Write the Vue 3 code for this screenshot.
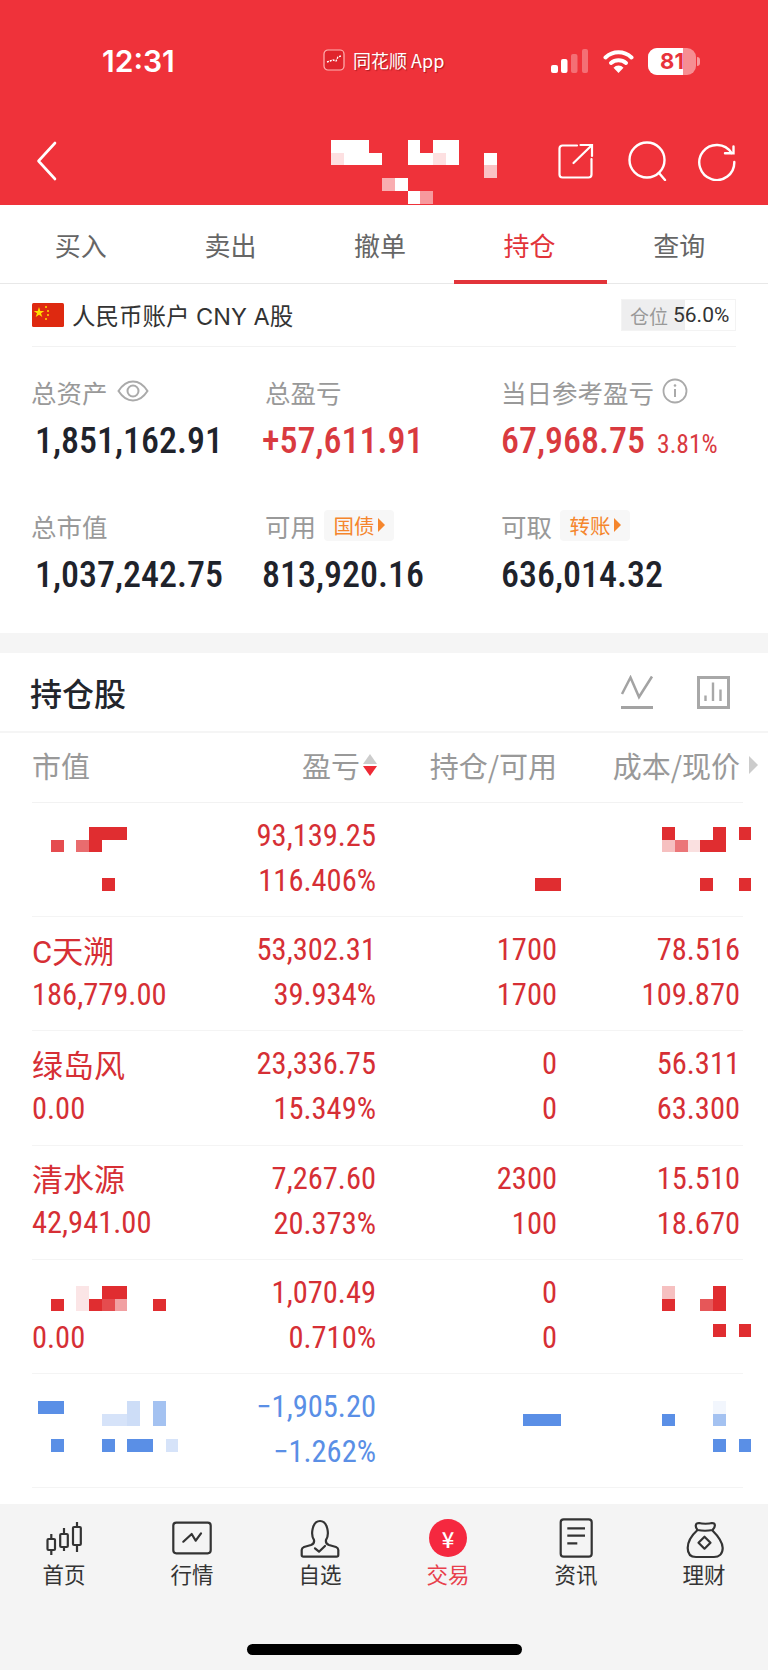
<template>
  <div class="page">
    <!-- 顶部 -->
    <header class="header">
      <div class="status">
        <span class="time">12:31</span>
        <div class="from-app">
          <svg class="app-logo" width="22" height="22" viewBox="0 0 22 22">
            <rect x="1" y="1" width="20" height="20" rx="4" fill="#e0242c" stroke="#ffb4b4" stroke-width="1.2" />
            <path d="M4 13l3-1 3-1 3 1 2-4 3-1" fill="none" stroke="#fff" stroke-width="1.4" stroke-dasharray="2 1" />
          </svg>
          <span class="app-name">同花顺 App</span>
        </div>
        <svg class="signal" width="37" height="24" viewBox="0 0 37 24">
          <rect x="0" y="16" width="7" height="8" rx="2" fill="#fff" />
          <rect x="10" y="10" width="6.5" height="14" rx="2" fill="#fff" />
          <rect x="20" y="5" width="6.5" height="19" rx="2" fill="#fff" fill-opacity=".3" />
          <rect x="31" y="0" width="6" height="24" rx="2" fill="#fff" fill-opacity=".3" />
        </svg>
        <svg class="wifi" width="31" height="24" viewBox="0 0 31 24">
          <path d="M2.5 8.5a19 19 0 0 1 26 0" fill="none" stroke="#fff" stroke-width="4" stroke-linecap="round" />
          <path d="M8 14a11.500 11.500 0 0 1 15 0" fill="none" stroke="#fff" stroke-width="4" stroke-linecap="round" />
          <path d="M15.500 24l-5-5.300a7 7 0 0 1 10 0z" fill="#fff" />
        </svg>
        <div class="battery">
          <div class="battery-fill"><span>81</span></div>
          <i class="battery-nib"></i>
        </div>
      </div>
      <div class="nav">
        <svg class="back" width="21" height="40" viewBox="0 0 21 40">
          <path d="M19 2L2.500 20 19 38" fill="none" stroke="#fff" stroke-width="2.600" stroke-linecap="round" stroke-linejoin="round" />
        </svg>
        <svg class="title-mosaic" width="166" height="64">
          <rect
            v-for="(c, i) in titleCells"
            :key="i"
            :x="c[0] * 12.75"
            :y="c[1] * 12.7"
            width="12.75"
            height="12.7"
            fill="#fff"
            :fill-opacity="c[2] ?? 1"
          />
        </svg>
        <svg class="nav-icon share" width="36" height="36" viewBox="0 0 36 36">
          <path d="M19 2.500H4.500a3 3 0 0 0-3 3v26a3 3 0 0 0 3 3h26a3 3 0 0 0 3-3V16" fill="none" stroke="#fff" stroke-width="2.200" stroke-linecap="round" />
          <path d="M15.500 20L33.500 2.500M22.500 2h11.500v11" fill="none" stroke="#fff" stroke-width="2.200" stroke-linecap="round" />
        </svg>
        <svg class="nav-icon search" width="40" height="40" viewBox="0 0 40 40">
          <circle cx="19" cy="19" r="17.500" fill="none" stroke="#fff" stroke-width="2.400" />
          <path d="M31 32l6 7" fill="none" stroke="#fff" stroke-width="2.400" stroke-linecap="round" />
        </svg>
        <svg class="nav-icon refresh" width="38" height="40" viewBox="0 0 38 40">
          <path d="M33.500 12A17.500 17.500 0 1 0 36.300 21" fill="none" stroke="#fff" stroke-width="2.400" stroke-linecap="round" />
          <path d="M35.500 5.500V12.300H27" fill="none" stroke="#fff" stroke-width="2.400" stroke-linecap="round" />
        </svg>
      </div>
    </header>

    <!-- 交易子菜单 -->
    <nav class="tabs">
      <span v-for="t in tabs" :key="t" class="tab" :class="{ active: t === '持仓' }">{{ t }}</span>
    </nav>

    <!-- 账户 -->
    <div class="account-wrap">
      <div class="account">
        <svg class="flag" width="32" height="24" viewBox="0 0 32 24">
          <rect width="32" height="24" rx="1.500" fill="#de2910" />
          <polygon points="7,4 8.300,8 12.300,8 9,10.300 10.300,14 7,11.800 3.700,14 5,10.300 1.700,8 5.700,8" fill="#ffde00" />
          <circle cx="14" cy="4" r="1" fill="#ffde00" />
          <circle cx="16" cy="8" r="1" fill="#ffde00" />
          <circle cx="16" cy="12" r="1" fill="#ffde00" />
          <circle cx="14" cy="16" r="1" fill="#ffde00" />
        </svg>
        <span class="account-name">人民币账户 CNY A股</span>
        <div class="position">
          <div class="position-fill" :style="{ width: positionRate + '%' }"></div>
          <span class="position-label">仓位</span>
          <span class="position-value">{{ positionRate.toFixed(1) }}%</span>
        </div>
      </div>
    </div>

    <!-- 资产概览 -->
    <section class="summary">
      <div class="stat">
        <div class="stat-label">
          总资产
          <svg class="eye" width="32" height="22" viewBox="0 0 32 22">
            <path d="M1.500 11C6 4 10.500 1.500 16 1.500S26 4 30.500 11C26 18 21.500 20.500 16 20.500S6 18 1.500 11z" fill="none" stroke="#aaa" stroke-width="2" />
            <circle cx="16" cy="11" r="5.500" fill="none" stroke="#aaa" stroke-width="2" />
          </svg>
        </div>
        <div class="stat-value first">1,851,162.91</div>
      </div>
      <div class="stat">
        <div class="stat-label">总盈亏</div>
        <div class="stat-value second red">+57,611.91</div>
      </div>
      <div class="stat">
        <div class="stat-label">
          当日参考盈亏
          <svg class="info" width="26" height="26" viewBox="0 0 26 26">
            <circle cx="13" cy="13" r="11.500" fill="none" stroke="#aaa" stroke-width="1.800" />
            <path d="M13 11v8" stroke="#aaa" stroke-width="2" />
            <circle cx="13" cy="7.500" r="1.300" fill="#aaa" />
          </svg>
        </div>
        <div class="stat-value red">67,968.75<small>3.81%</small></div>
      </div>
      <div class="stat">
        <div class="stat-label">总市值</div>
        <div class="stat-value first">1,037,242.75</div>
      </div>
      <div class="stat">
        <div class="stat-label">可用<span class="tag">国债<i></i></span></div>
        <div class="stat-value second">813,920.16</div>
      </div>
      <div class="stat">
        <div class="stat-label">可取<span class="tag">转账<i></i></span></div>
        <div class="stat-value">636,014.32</div>
      </div>
    </section>

    <div class="band"></div>

    <!-- 持仓股 -->
    <section class="holdings">
      <div class="holdings-head">
        <h2>持仓股</h2>
        <svg class="line-icon" width="34" height="34" viewBox="0 0 34 34">
          <path d="M2 19L10.500 2.500 19 22 32 1.500" fill="none" stroke="#a3a3a3" stroke-width="2.500" />
          <path d="M1 32.500H33" stroke="#a3a3a3" stroke-width="3" />
        </svg>
        <svg class="bar-icon" width="33" height="33" viewBox="0 0 33 33">
          <rect x="1.500" y="1.500" width="30" height="30" fill="none" stroke="#a8a8a8" stroke-width="3" />
          <path d="M8.500 19.500V25M16 6.500V25M23.500 13.500V25" stroke="#a8a8a8" stroke-width="2.400" />
        </svg>
      </div>

      <div class="table">
        <div class="table-head">
          <span>市值</span>
          <span class="sortable">盈亏<i class="sort"><b class="sort-up"></b><b class="sort-down"></b></i></span>
          <span>持仓/可用</span>
          <span class="last">成本/现价<i class="more"></i></span>
        </div>
        <div v-for="(row, idx) in rows" :key="idx" class="row" :class="row.down ? 'down' : 'up'">
          <div class="cell name-cell">
            <template v-if="row.name">
              <div class="name">{{ row.name }}</div>
              <div class="num">{{ row.value }}</div>
            </template>
            <template v-else-if="row.value">
              <svg class="mosaic name-mosaic">
                <rect v-for="(c, i) in row.nameMask" :key="i" v-bind="cellRect(6, row.top, c)" />
              </svg>
              <div class="num under-mask">{{ row.value }}</div>
            </template>
            <svg v-else class="mosaic">
              <rect v-for="(c, i) in row.nameMask" :key="i" v-bind="cellRect(6, row.top, c)" />
            </svg>
          </div>
          <div class="cell right">
            <div class="num">{{ row.pl }}</div>
            <div class="num">{{ row.rate }}</div>
          </div>
          <div class="cell right">
            <template v-if="row.qty">
              <div class="num">{{ row.qty[0] }}</div>
              <div class="num">{{ row.qty[1] }}</div>
            </template>
            <svg v-else class="mosaic">
              <rect v-for="(c, i) in row.qtyMask" :key="i" v-bind="cellRect(row.qtyX, row.top, c)" />
            </svg>
          </div>
          <div class="cell right">
            <template v-if="row.price">
              <div class="num">{{ row.price[0] }}</div>
              <div class="num">{{ row.price[1] }}</div>
            </template>
            <svg v-else class="mosaic">
              <rect v-for="(c, i) in row.priceMask" :key="i" v-bind="cellRect(105, row.top, c)" />
            </svg>
          </div>
        </div>
      </div>
    </section>

    <!-- 底部导航 -->
    <footer class="footer">
      <div class="foot-tabs">
        <div class="foot-tab">
          <svg width="44" height="44" viewBox="0 0 44 44" fill="none" stroke="#333" stroke-width="2.200">
            <rect x="5.500" y="23" width="7.500" height="11" rx="1" />
            <path d="M9.300 18v5M9.300 34v5" />
            <rect x="18.200" y="18" width="7.600" height="13" rx="1" />
            <path d="M22 12v6M22 31v4" />
            <rect x="31" y="11" width="7.800" height="18" rx="1" />
            <path d="M35 6v5M35 29v7" />
          </svg>
          <span>首页</span>
        </div>
        <div class="foot-tab">
          <svg width="44" height="44" viewBox="0 0 44 44" fill="none" stroke="#333" stroke-width="2.200">
            <rect x="3.300" y="6.700" width="37.400" height="30.600" rx="3" />
            <path d="M13.300 25.700L21.700 18l4 6.700 5.300-7.400" stroke-linecap="round" stroke-linejoin="round" />
          </svg>
          <span>行情</span>
        </div>
        <div class="foot-tab">
          <svg width="44" height="44" viewBox="0 0 44 44" fill="none" stroke="#333" stroke-width="2.200" stroke-linejoin="round">
            <path d="M16 24C12.500 19 14 5 22 5s9.500 14 6 19c-.5 2.500 .5 4 3 5l7 2q2.300 1 2.300 3v5q0 1.700-1.800 1.700H5.500Q3.700 40.700 3.700 39v-5q0-2 2.300-3l7-2c2.500-1 3.500-2.500 3-5z" />
            <path d="M17 32.300l4 3.400 6-5.700" stroke-linecap="round" />
          </svg>
          <span>自选</span>
        </div>
        <div class="foot-tab active">
          <div class="trade-dot">¥</div>
          <span>交易</span>
        </div>
        <div class="foot-tab">
          <svg width="44" height="44" viewBox="0 0 44 44" fill="none" stroke="#333" stroke-width="2.200">
            <rect x="6.700" y="3.300" width="31" height="37.400" rx="3" />
            <path d="M13.300 12.300H31M13.300 19.700H31M13.300 27.300H23.300" />
          </svg>
          <span>资讯</span>
        </div>
        <div class="foot-tab">
          <svg width="44" height="44" viewBox="0 0 44 44" fill="none" stroke="#333" stroke-width="2.200" stroke-linejoin="round">
            <path d="M15.500 14C10 19 5.700 26 5.700 32c0 6 3.300 9 8.300 9h18c5 0 8.700-3 8.700-9 0-6-5.700-13-10.700-18" />
            <path d="M15.500 14C13 11 13 7 17 7c3 1 10 1 13 0 4 0 3.500 4 .5 7-5 1-10 1-15 0z" />
            <path d="M22.500 20.700l6 6-6 6-6-6z" />
          </svg>
          <span>理财</span>
        </div>
      </div>
      <div class="home-bar"></div>
    </footer>
  </div>
</template>

<script setup>
const positionRate = 56

const tabs = ['买入', '卖出', '撤单', '持仓', '查询']

// 打码块: [列, 行, 透明度]
const titleCells = [
  [0, 0], [1, 0], [2, 0], [6, 0], [8, 0], [9, 0],
  [0, 1, 0.85], [1, 1], [2, 1], [3, 1], [6, 1], [7, 1], [8, 1, 0.85], [9, 1], [12, 1],
  [12, 2, 0.7],
  [4, 3, 0.6], [5, 3],
  [6, 4], [7, 4, 0.5]
]

const rows = [
  {
    top: 24,
    pl: '93,139.25',
    rate: '116.406%',
    nameMask: [[4, 0], [5, 0], [6, 0], [1, 1, 0.85], [3, 1, 0.7], [4, 1], [5, 4]],
    qtyX: 159,
    qtyMask: [[0, 4], [1, 4]],
    priceMask: [[0, 0], [4, 0], [6, 0], [0, 1, 0.3], [1, 1, 0.65], [2, 1, 0.15], [3, 1], [4, 1], [3, 4], [6, 4]]
  },
  { name: 'C天溯', value: '186,779.00', pl: '53,302.31', rate: '39.934%', qty: ['1700', '1700'], price: ['78.516', '109.870'] },
  { name: '绿岛风', value: '0.00', pl: '23,336.75', rate: '15.349%', qty: ['0', '0'], price: ['56.311', '63.300'] },
  { name: '清水源', value: '42,941.00', pl: '7,267.60', rate: '20.373%', qty: ['2300', '100'], price: ['15.510', '18.670'] },
  {
    top: 26,
    value: '0.00',
    pl: '1,070.49',
    rate: '0.710%',
    nameMask: [[3, 0, 0.12], [5, 0], [6, 0], [1, 1], [3, 1, 0.12], [4, 1], [5, 1, 0.85], [6, 1, 0.45], [9, 1]],
    qty: ['0', '0'],
    priceMask: [[0, 0, 0.3], [4, 0], [0, 1], [3, 1, 0.8], [4, 1], [4, 3], [6, 3]]
  },
  {
    top: 27,
    down: true,
    pl: '−1,905.20',
    rate: '−1.262%',
    nameMask: [[0, 0], [1, 0], [7, 0, 0.3], [9, 0, 0.55], [5, 1, 0.25], [6, 1, 0.25], [7, 1, 0.3], [9, 1, 0.55], [1, 3], [5, 3], [7, 3], [8, 3], [10, 3, 0.25]],
    qtyX: 146.5,
    qtyMask: [[0, 1], [1, 1], [2, 1]],
    priceMask: [[4, 0, 0.08], [0, 1], [4, 1, 0.55], [4, 3], [6, 3]]
  }
]

const cellRect = (left, top, c) => ({
  x: left + c[0] * 12.75,
  y: top + c[1] * 12.7,
  width: 12.75,
  height: 12.7,
  'fill-opacity': c[2] ?? 1
})
</script>

<style>
html,
body {
  margin: 0;
  background: #fff;
}
</style>

<style scoped>
.page {
  width: 768px;
  height: 1670px;
  display: flex;
  flex-direction: column;
  overflow: hidden;
  background: #fff;
  font-family: "Noto Sans CJK SC", sans-serif;
  color: #333;
}

.header {
  height: 205px;
  background: #ef323a;
  flex: none;
}

.status {
  height: 122px;
  display: flex;
  align-items: center;
}

.time {
  width: 323px;
  padding-left: 102px;
  box-sizing: border-box;
  font-family: Inter, sans-serif;
  font-size: 30px;
  font-weight: 600;
  color: #fff;
}

.from-app {
  width: 228px;
  display: flex;
  align-items: center;
  gap: 8px;
  margin-top: -2px;
}

.app-name {
  font-size: 18px;
  color: #fff;
  text-shadow: 1px 1px 1px rgba(90, 0, 0, 0.45);
}

.signal {
  margin-right: 15px;
}

.wifi {
  margin-right: 14px;
}

.battery {
  position: relative;
  width: 48px;
  height: 27px;
  border-radius: 9px;
  background: rgba(255, 255, 255, 0.45);
}

.battery-fill {
  width: 35px;
  height: 27px;
  border-radius: 9px 0 0 9px;
  background: #fff;
}

.battery-fill span {
  display: block;
  width: 48px;
  text-align: center;
  font-family: Inter, sans-serif;
  font-weight: 700;
  font-size: 22px;
  line-height: 27px;
  color: #e8333c;
}

.battery-nib {
  position: absolute;
  right: -4px;
  top: 9px;
  width: 3px;
  height: 9px;
  border-radius: 0 3px 3px 0;
  background: rgba(255, 255, 255, 0.5);
}

.nav {
  display: flex;
  align-items: center;
  height: 78px;
}

.back {
  margin-left: 36px;
}

.title-mosaic {
  align-self: flex-start;
  margin: 18px 0 0 274px;
  shape-rendering: crispEdges;
}

.share {
  margin-left: 61px;
}

.search {
  margin-left: 34px;
}

.refresh {
  margin-left: 30px;
}

.tabs {
  flex: none;
  height: 78px;
  padding: 0 14px 0 6px;
  display: grid;
  grid-template-columns: repeat(5, 1fr);
  grid-template-rows: 78px;
  border-bottom: 1px solid #e8e8e8;
}

.tab {
  position: relative;
  text-align: center;
  font-size: 26px;
  line-height: 80px;
  color: #666;
}

.tab.active {
  color: #e2343a;
}

.tab.active::after {
  content: "";
  position: absolute;
  left: -1px;
  right: -3px;
  bottom: -1px;
  height: 4px;
  background: #e2343a;
}

.account-wrap {
  flex: none;
  padding: 0 32px;
}

.account {
  height: 62px;
  display: flex;
  align-items: center;
  border-bottom: 1px solid #f2f2f2;
}

.account-name {
  margin-left: 8px;
  font-family: Inter, "Noto Sans CJK SC", sans-serif;
  font-size: 23.500px;
  color: #333;
}

.position {
  position: relative;
  margin-left: auto;
  width: 115px;
  height: 32px;
  box-sizing: border-box;
  border: 1px solid #f3f3f3;
  display: flex;
  align-items: center;
  padding-left: 8px;
}

.position-fill {
  position: absolute;
  left: 0;
  top: 0;
  bottom: 0;
  background: #eeeeef;
}

.position-label {
  position: relative;
  font-size: 19px;
  color: #999;
}

.position-value {
  position: relative;
  margin-left: 5px;
  font-family: Roboto, sans-serif;
  font-size: 21px;
  color: #333;
}

.summary {
  flex: none;
  height: 286px;
  box-sizing: border-box;
  padding: 24px 0 0 31px;
  display: grid;
  grid-template-columns: 234px 236px 1fr;
  grid-auto-rows: 100px;
  row-gap: 34px;
}

.stat-label {
  height: 40px;
  display: flex;
  align-items: center;
  font-size: 25.500px;
  color: #999;
}

.eye {
  margin-left: 9px;
}

.info {
  margin-left: 8px;
}

.stat-value {
  font-family: Roboto, sans-serif;
  font-weight: 460;
  font-size: 36px;
  line-height: 60px;
  font-stretch: 87%;
  color: #1f232b;
  white-space: nowrap;
}

.stat-value.first {
  margin-left: 4px;
}

.stat-value.second {
  margin-left: -3px;
}

.stat-value.red,
.stat-value.red small {
  color: #d93a3f;
}

.stat-value small {
  margin-left: 12px;
  font-size: 25.500px;
  font-weight: 450;
}

.tag {
  margin-left: 8px;
  width: 70px;
  height: 31px;
  border-radius: 4px;
  background: #f7f7f7;
  display: flex;
  align-items: center;
  justify-content: center;
  gap: 3px;
  font-size: 20.500px;
  color: #f5862d;
}

.tag i {
  border-left: 7px solid #f5862d;
  border-top: 7px solid transparent;
  border-bottom: 7px solid transparent;
}

.band {
  flex: none;
  height: 20px;
  background: #f5f5f5;
}

.holdings {
  flex: none;
}

.holdings-head {
  height: 78px;
  padding: 0 38px 0 30px;
  display: flex;
  align-items: center;
  border-bottom: 2px solid #f5f5f5;
}

.holdings-head h2 {
  margin: 0 auto 0 0;
  font-size: 32px;
  font-weight: 500;
  color: #22252b;
}

.line-icon {
  margin-right: 43px;
}

.table {
  margin: 0 25px 0 32px;
}

.table-head,
.row {
  display: grid;
  grid-template-columns: 168px 176px 181px 183px;
  box-sizing: border-box;
}

.table-head {
  height: 70px;
  padding-bottom: 5px;
  align-items: center;
  border-bottom: 1px solid #f2f2f2;
  font-size: 29px;
  color: #999;
}

.table-head span {
  text-align: right;
  white-space: nowrap;
}

.table-head span:first-child {
  text-align: left;
}

.table-head .sortable {
  position: relative;
  padding-right: 16px;
}

.table-head .last {
  position: relative;
}

.sort {
  position: absolute;
  right: -1px;
  top: 50%;
  margin-top: -11px;
  display: flex;
  flex-direction: column;
  gap: 2px;
}

.sort b {
  display: block;
  border-left: 7px solid transparent;
  border-right: 7px solid transparent;
}

.sort-up {
  border-bottom: 10px solid #ccc;
}

.sort-down {
  border-top: 10px solid #ee2a35;
}

.more {
  position: absolute;
  right: -18px;
  top: 50%;
  margin-top: -9px;
  border-left: 9px solid #ccc;
  border-top: 9px solid transparent;
  border-bottom: 9px solid transparent;
}

.row {
  height: 114.200px;
  border-bottom: 1px solid #f4f4f4;
  padding-top: 10px;
}

.up {
  color: #d62f35;
}

.down {
  color: #5a8fe6;
}

.cell {
  position: relative;
}

.right {
  text-align: right;
}

.num {
  font-family: Roboto, sans-serif;
  font-size: 30.500px;
  font-weight: 450;
  line-height: 45px;
  font-stretch: 87%;
  white-space: nowrap;
}

.name-cell .name {
  margin-top: 4.500px;
  font-family: Roboto, "Noto Sans CJK SC", sans-serif;
  font-size: 31px;
  line-height: 42px;
}

.name-cell .name + .num {
  line-height: 41px;
}

.under-mask {
  position: absolute;
  left: 0;
  top: 45px;
}

.mosaic {
  position: absolute;
  left: 0;
  top: -10px;
  width: 100%;
  height: 114px;
  overflow: visible;
  fill: currentColor;
  shape-rendering: crispEdges;
}

.up .mosaic {
  fill: #e02d30;
}

.footer {
  margin-top: auto;
  height: 166px;
  flex: none;
  background: #f4f4f4;
  display: flex;
  flex-direction: column;
}

.foot-tabs {
  display: grid;
  grid-template-columns: repeat(6, 1fr);
  padding-top: 12px;
}

.foot-tab {
  display: flex;
  flex-direction: column;
  align-items: center;
  font-size: 21.500px;
  color: #333;
}

.foot-tab span {
  margin-top: -1px;
  line-height: 30px;
}

.foot-tab.active {
  color: #e8404c;
}

.trade-dot {
  width: 38px;
  height: 38px;
  margin: 3px 0;
  border-radius: 50%;
  background: #f5283f;
  color: #fff;
  font-weight: 500;
  font-size: 22px;
  line-height: 38px;
  text-align: center;
}

.home-bar {
  width: 275px;
  height: 11px;
  margin: auto auto 15px;
  border-radius: 6px;
  background: #000;
}
</style>
